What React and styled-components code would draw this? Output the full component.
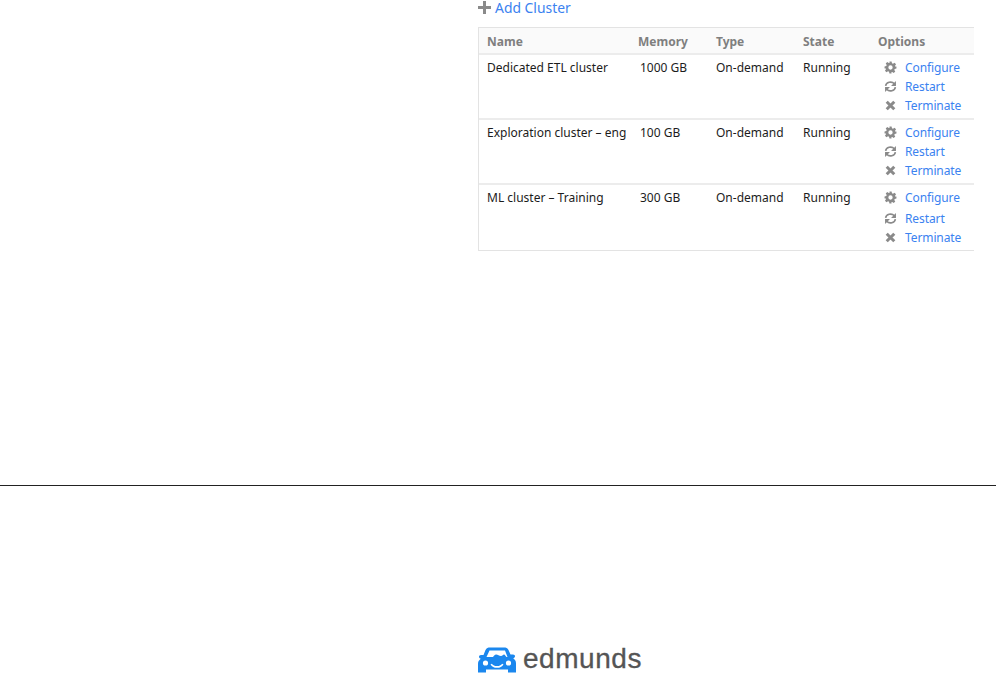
import React from 'react';
import styled, { createGlobalStyle } from 'styled-components';

const GlobalStyle = createGlobalStyle`
	html, body {
		margin: 0;
		padding: 0;
		background: #fff;
		overflow: hidden;
	}
	body {
		font-family: "Noto Sans", "Open Sans", sans-serif;
		color: #1c1c1c;
	}
`;

const Page = styled.div`
	width: 996px;
	height: 673px;
	display: flex;
	flex-direction: column;
	overflow: hidden;
`;

const Content = styled.main`
	height: 486px;
	box-sizing: border-box;
	padding-left: 478px;
	padding-right: 22px;
	border-bottom: 1px solid #222;
`;

const AddLink = styled.a`
	display: flex;
	align-items: center;
	gap: 4px;
	height: 15px;
	margin-bottom: 12px;
	font-size: 13.9px;
	line-height: 15px;
	color: #3b82f0;
`;

const Table = styled.div`
	border-top: 1px solid #e3e3e3;
	border-left: 1px solid #e3e3e3;
	border-bottom: 1px solid #e3e3e3;
	font-size: 12px;
`;

const Row = styled.div`
	display: grid;
	grid-template-columns: 151px 78px 87px 75px 1fr;
	height: ${p => p.$height}px;
	box-sizing: border-box;
	padding-left: 8px;
	border-top: ${p => (p.$first ? 'none' : '2px solid #ececec')};
`;

const HeadRow = styled(Row)`
	background: #fafafa;
	align-items: center;
	padding-top: 2px;
	font-weight: 700;
	color: #7f7f7f;
`;

const Cell = styled.div`
	padding-top: 4px;
	line-height: 17px;
	white-space: nowrap;
	padding-left: ${p => p.$indent || 0}px;
`;

const Options = styled.div`
	display: flex;
	flex-direction: column;
	gap: 2px;
	padding: 4px 0 0 6px;
`;

const Option = styled.a`
	display: flex;
	align-items: center;
	gap: 8px;
	height: 17px;
	margin-top: ${p => p.$offset || 0}px;
	letter-spacing: -0.1px;
	color: #3b82f0;
`;

const Footer = styled.footer`
	flex: 1;
	display: flex;
	align-items: flex-end;
	padding-left: 478px;
`;

const Brand = styled.div`
	display: flex;
	align-items: center;
	height: 28px;
	padding-top: 1px;
	box-sizing: border-box;
`;

const Wordmark = styled.span`
	margin: 0 0 2px 7px;
	font-family: "Liberation Sans", Arial, sans-serif;
	font-size: 28px;
	line-height: 30px;
	letter-spacing: 0.55px;
	color: #555;
	-webkit-text-stroke: 0.3px #555;
`;

const PlusIcon = () => (
	<svg width="13" height="13" viewBox="0 0 13 13">
		<path d="M5 0h3v5h5v3H8v5H5V8H0V5h5z" fill="#8a8a8a" />
	</svg>
);

const GearIcon = () => (
	<svg width="13" height="13" viewBox="0 0 24 24" fill="#8a8a8a">
		<path fillRule="evenodd" d="M10 1h4l.7 3.2 1.9.8 2.8-1.8 2.8 2.8-1.8 2.8.8 1.9L23 10v4l-3.2.7-.8 1.9 1.8 2.8-2.8 2.8-2.8-1.8-1.9.8L14 23h-4l-.7-3.2-1.9-.8-2.8 1.8-2.8-2.8 1.8-2.8-.8-1.9L1 14v-4l3.2-.7.8-1.9-1.8-2.8 2.8-2.8 2.8 1.8 1.9-.8zM12 8a4 4 0 1 0 0 8 4 4 0 0 0 0-8z" />
	</svg>
);

const RefreshIcon = () => (
	<svg width="13" height="13" viewBox="0 0 24 24" fill="none" stroke="#8a8a8a" strokeWidth="3">
		<path d="M3 11a9 8 0 0 1 16-4l2 2" />
		<path d="M22 2v9h-9z" fill="#8a8a8a" stroke="none" />
		<path d="M21 13a9 8 0 0 1-16 4l-2-2" />
		<path d="M2 22v-9h9z" fill="#8a8a8a" stroke="none" />
	</svg>
);

const CrossIcon = () => (
	<svg width="13" height="13" viewBox="0 0 24 24" fill="none" stroke="#8a8a8a" strokeWidth="5.5">
		<path d="M5 5l14 14M19 5L5 19" />
	</svg>
);

const CarLogo = () => (
	<svg width="38" height="26" viewBox="0 0 38 26">
		<path
			fill="#1b87ee"
			fillRule="evenodd"
			d="M7.500 3C8.500 1 10 .5 12 .5h14c2 0 3.500.5 4.500 2.500l2 4.500H35c1.200 0 2 .8 2 1.800 0 1-.8 1.700-1.800 1.900 1.500 1.200 2.800 2.600 2.800 5V25.500h-8v-3H8v3H0V16.700c0-2.400 1.300-3.800 2.800-5C1.800 11.500 1 10.800 1 9.800c0-1 .8-1.800 2-1.800h2.500zM11.500 3.500 8.500 10h6.500c1-1.500 2-2.500 3-2.500 2 0 3 1.500 5 1.500 1.500 0 2-1.500 3-1.500s1.500 1.500 2.500 2.500h1L27 3.500zM7.500 13.400a2.600 2.600 0 1 0 0 5.200 2.600 2.600 0 0 0 0-5.200zm23 0a2.600 2.600 0 1 0 0 5.200 2.600 2.600 0 0 0 0-5.200zM12.500 17.500c1.500 2.500 3.500 3.300 6.500 3.300s5-.8 6.500-3.300l-1.300-.7c-1.200 1.700-3 2.300-5.200 2.300s-4-.6-5.200-2.300z"
		/>
	</svg>
);

const clusters = [
	{ name: 'Dedicated ETL cluster', memory: '1000 GB', height: 65, offset: 0 },
	{ name: 'Exploration cluster – eng', memory: '100 GB', height: 65, offset: 0 },
	{ name: 'ML cluster – Training', memory: '300 GB', height: 67, offset: 2 },
];

function App() {
	return (
		<Page>
			<GlobalStyle />
			<Content>
				<AddLink><PlusIcon />Add Cluster</AddLink>
				<Table>
					<HeadRow $first $height={25}>
						<div>Name</div>
						<div>Memory</div>
						<div>Type</div>
						<div>State</div>
						<div>Options</div>
					</HeadRow>
					{clusters.map(c => (
						<Row key={c.name} $height={c.height}>
							<Cell>{c.name}</Cell>
							<Cell $indent={2}>{c.memory}</Cell>
							<Cell>On-demand</Cell>
							<Cell>Running</Cell>
							<Options>
								<Option><GearIcon />Configure</Option>
								<Option $offset={c.offset}><RefreshIcon />Restart</Option>
								<Option><CrossIcon />Terminate</Option>
							</Options>
						</Row>
					))}
				</Table>
			</Content>
			<Footer>
				<Brand>
					<CarLogo />
					<Wordmark>edmunds</Wordmark>
				</Brand>
			</Footer>
		</Page>
	);
}

export default App;
